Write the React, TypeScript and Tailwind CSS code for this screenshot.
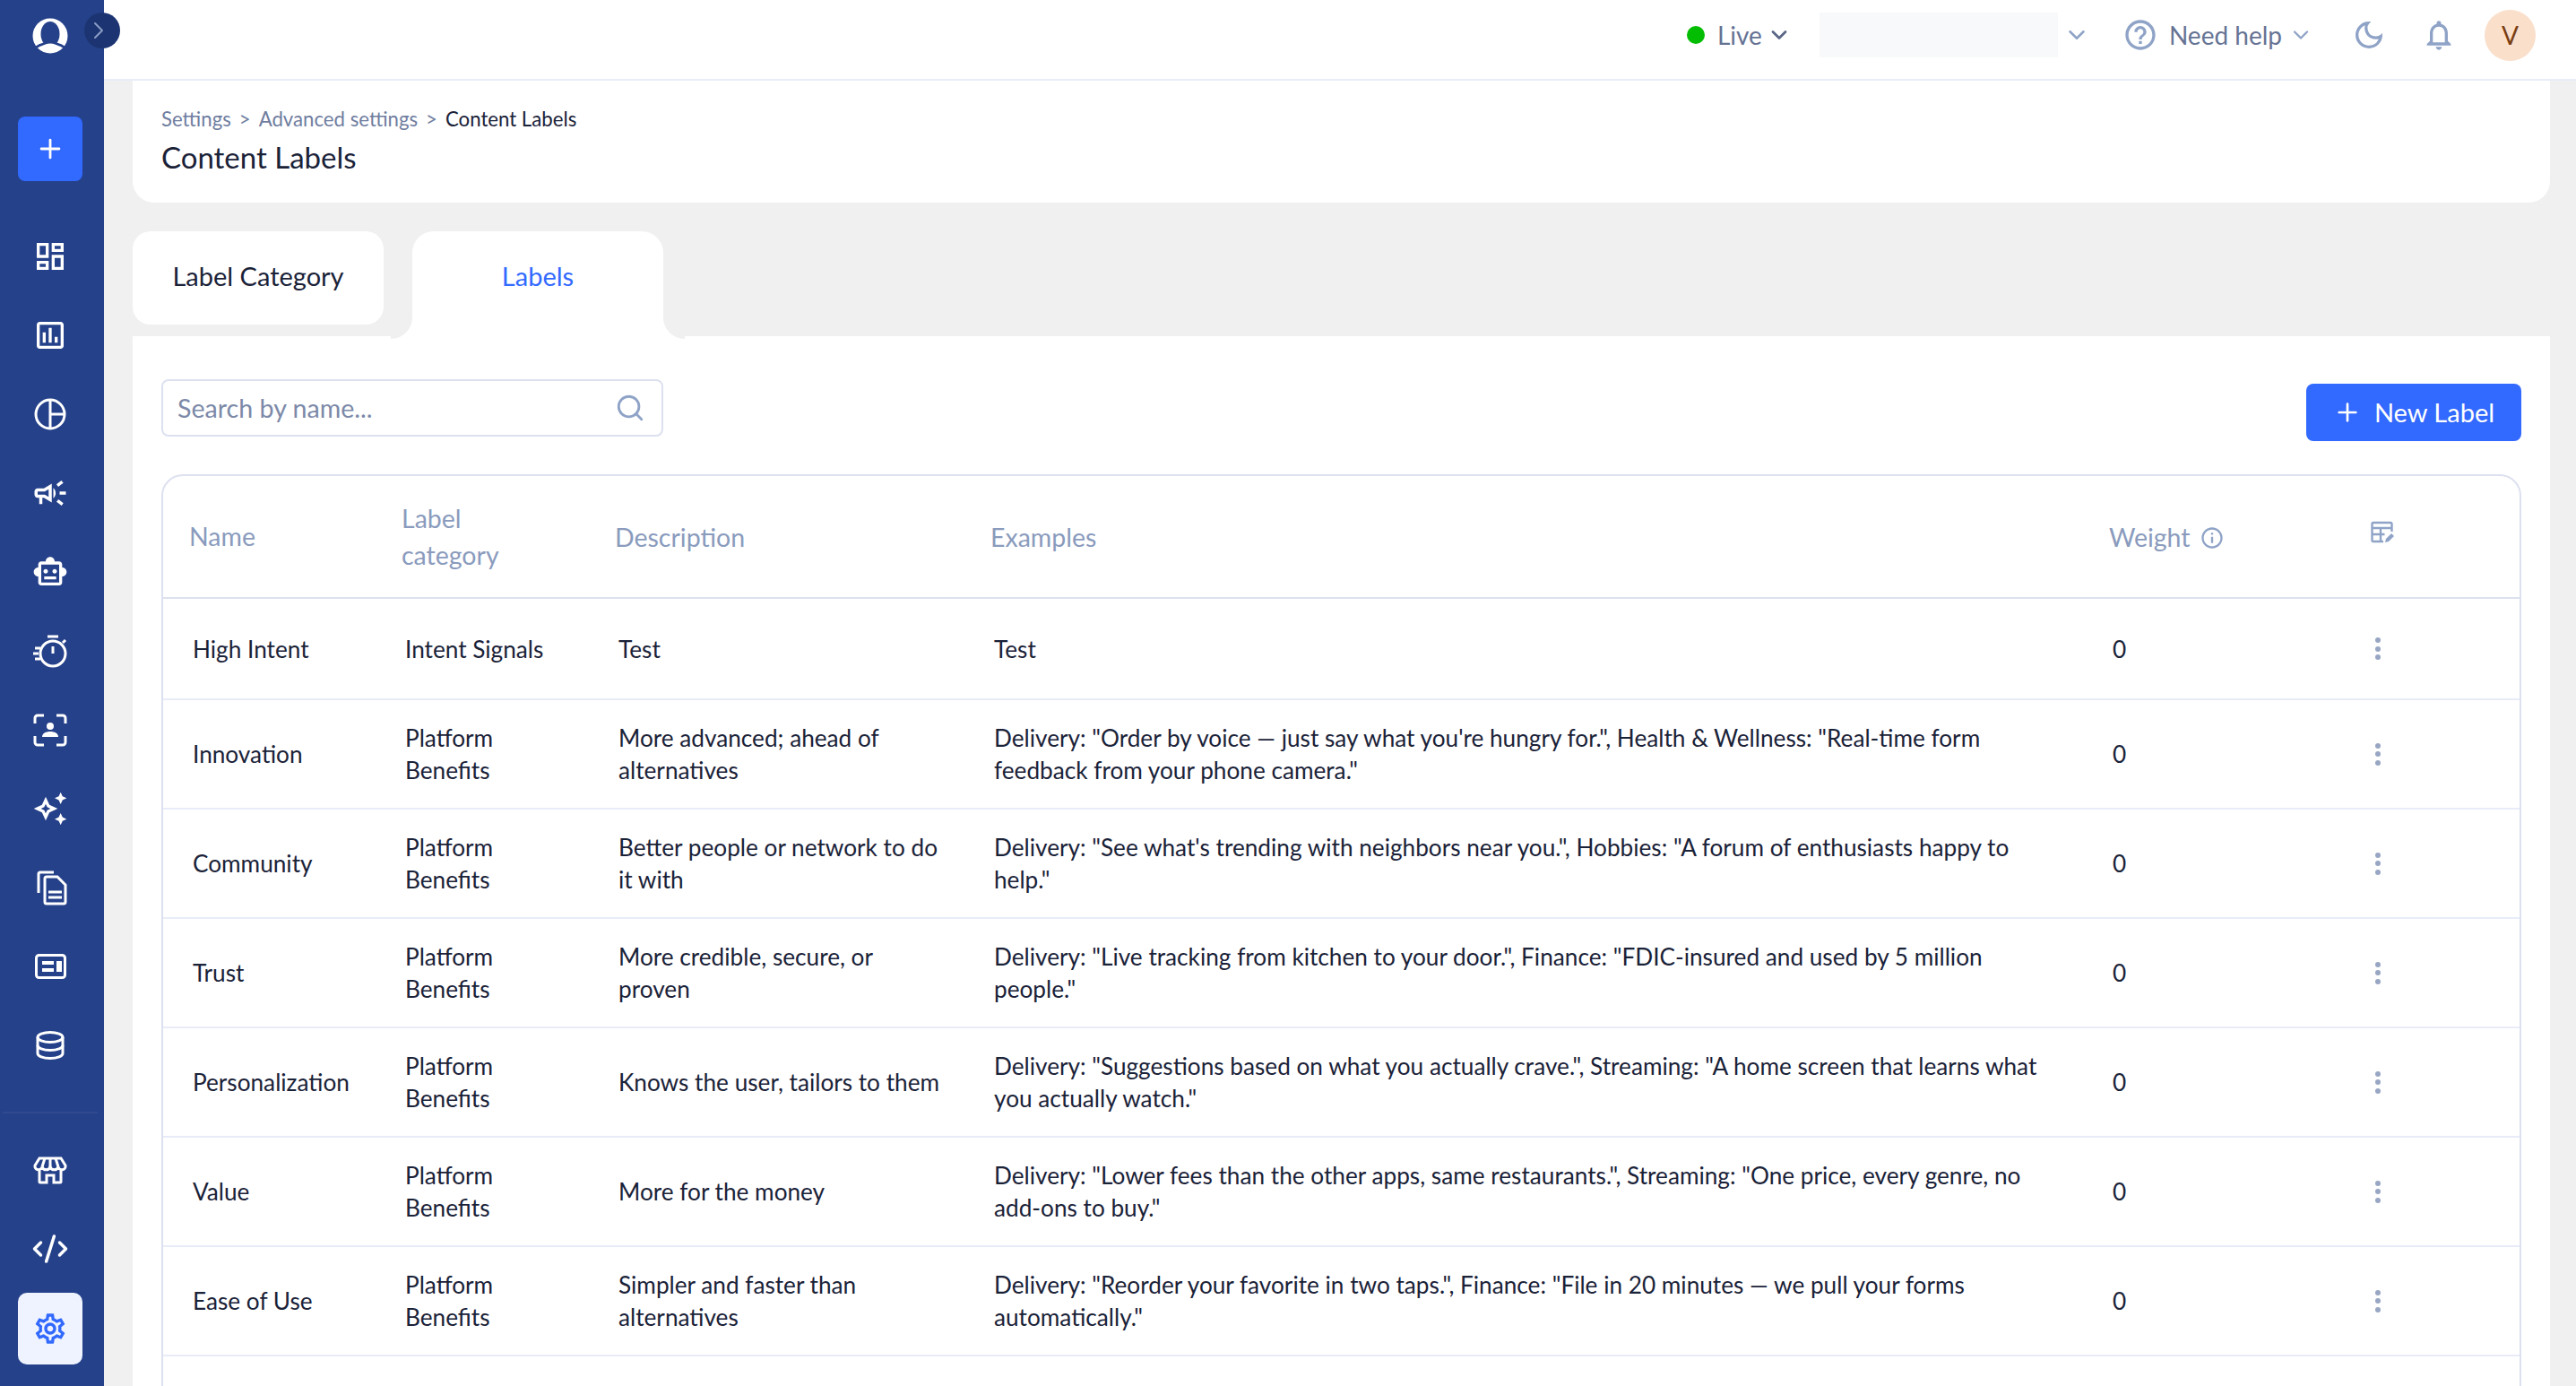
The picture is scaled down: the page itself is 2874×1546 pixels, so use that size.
import { ChevronDown, ChevronRight, CodeXml, Plus, Search } from "lucide-react";
import {
  MdOutlineDashboard,
  MdOutlineAssessment,
  MdOutlineCampaign,
  MdOutlineSmartToy,
  MdOutlineAutoAwesome,
  MdOutlineSettings,
  MdOutlineHelpOutline,
  MdOutlineNotifications,
  MdInfoOutline,
  MdOutlineDarkMode,
} from "react-icons/md";

const fontStack = "font-['Lato','Noto_Sans',sans-serif]";

const PieIcon = () => (
  <svg width="40" height="40" viewBox="0 0 40 40" fill="none" stroke="currentColor" strokeWidth="3">
    <circle cx="20" cy="20" r="16" />
    <path d="M20 4v32M20 20h16" />
  </svg>
);

const TimerIcon = () => (
  <svg width="40" height="40" viewBox="0 0 40 40" fill="none" stroke="currentColor" strokeWidth="3">
    <circle cx="23" cy="23" r="14" />
    <path d="M17 4h12M23 15v8M34 11l3-3M3 17h6M1 23h6M3 29h6" />
  </svg>
);

const FaceIcon = () => (
  <svg width="40" height="40" viewBox="0 0 40 40" fill="none" stroke="currentColor" strokeWidth="3">
    <path d="M3 13V7a3 3 0 0 1 3-3h7M27 4h7a3 3 0 0 1 3 3v6M37 27v7a3 3 0 0 1-3 3h-7M13 37H6a3 3 0 0 1-3-3v-7" />
    <circle cx="20" cy="16" r="4" fill="currentColor" stroke="none" />
    <path d="M11 28c0-4 4-6 9-6s9 2 9 6z" fill="currentColor" stroke="none" />
  </svg>
);

const DocsIcon = () => (
  <svg width="40" height="40" viewBox="0 0 40 40" fill="none" stroke="currentColor" strokeWidth="3">
    <path d="M7 26V5a2 2 0 0 1 2-2h15" />
    <path d="M14 10a2 2 0 0 1 2-2h12l9 9v19a2 2 0 0 1-2 2H16a2 2 0 0 1-2-2z" />
    <path d="M18 25h15M18 31h15" />
  </svg>
);

const NewsIcon = () => (
  <svg width="40" height="40" viewBox="0 0 40 40" fill="none">
    <rect x="4.5" y="7.5" width="32" height="25" rx="3" stroke="currentColor" strokeWidth="3" />
    <path d="M11 14h13v4H11zM11 22h13v4H11zM27 14h6v12h-6z" fill="currentColor" />
  </svg>
);

const DbIcon = () => (
  <svg width="40" height="40" viewBox="0 0 40 40" fill="none" stroke="currentColor" strokeWidth="3">
    <ellipse cx="20" cy="11" rx="14" ry="5.5" />
    <path d="M6 11v18c0 3 6 5.5 14 5.5S34 32 34 29V11" />
    <path d="M6 20c0 3 6 5.5 14 5.5S34 23 34 20" />
  </svg>
);

const StoreIcon = () => (
  <svg width="40" height="40" viewBox="0 0 40 40" fill="none" stroke="currentColor" strokeWidth="3">
    <path d="M8 7h24l5 8a4 4 0 0 1-8 1.5 4.7 4.7 0 0 1-9 0 4.7 4.7 0 0 1-9 0A4 4 0 0 1 3 15z" />
    <path d="M14 7l-3 9.5M26 7l3 9.5M20 7v9.5" />
    <path d="M8 21v12a1 1 0 0 0 1 1h7v-8h8v8h7a1 1 0 0 0 1-1V21" />
  </svg>
);

const Logo = () => (
  <svg width="40" height="40" viewBox="0 0 40 40">
    <circle cx="20" cy="20" r="19.5" fill="#fff" />
    <ellipse cx="20" cy="18" rx="10.5" ry="14" fill="#25418a" />
    <path d="M0 36 C5 32 10 28 20 28 C30 28 35 32 40 36" fill="none" stroke="#25418a" strokeWidth="3" />
    <path d="M10 33 C13 29.5 16 28.5 20 28.5 C24 28.5 27 29.5 30 33 C27 38 13 38 10 33z" fill="#fff" />
  </svg>
);

const TableEditIcon = () => (
  <svg width="26" height="26" viewBox="0 0 26 26" fill="none" stroke="#8fa3c7" strokeWidth="2.4">
    <path d="M14 23H3a1.5 1.5 0 0 1-1.5-1.5v-18A1.5 1.5 0 0 1 3 2h19a1.5 1.5 0 0 1 1.5 1.5V12" />
    <path d="M1.5 8h22M1.5 15h14M11 8v14" />
    <path d="M16 24l1-4 6-6 3 3-6 6z" fill="#8fa3c7" stroke="none" />
  </svg>
);

const navItems = [
  <MdOutlineDashboard size={40} key="a" />,
  <MdOutlineAssessment size={40} key="b" />,
  <PieIcon key="c" />,
  <MdOutlineCampaign size={42} key="d" />,
  <MdOutlineSmartToy size={40} key="e" />,
  <TimerIcon key="f" />,
  <FaceIcon key="g" />,
  <MdOutlineAutoAwesome size={40} key="h" />,
  <DocsIcon key="i" />,
  <NewsIcon key="j" />,
  <DbIcon key="k" />,
];

const rows = [
  { name: "High Intent", cat: "Intent Signals", desc: "Test", ex: "Test" },
  {
    name: "Innovation",
    cat: "Platform Benefits",
    desc: "More advanced; ahead of alternatives",
    ex: 'Delivery: "Order by voice — just say what you\'re hungry for.", Health & Wellness: "Real-time form feedback from your phone camera."',
  },
  {
    name: "Community",
    cat: "Platform Benefits",
    desc: "Better people or network to do it with",
    ex: 'Delivery: "See what\'s trending with neighbors near you.", Hobbies: "A forum of enthusiasts happy to help."',
  },
  {
    name: "Trust",
    cat: "Platform Benefits",
    desc: "More credible, secure, or proven",
    ex: 'Delivery: "Live tracking from kitchen to your door.", Finance: "FDIC-insured and used by 5 million people."',
  },
  {
    name: "Personalization",
    cat: "Platform Benefits",
    desc: "Knows the user, tailors to them",
    ex: 'Delivery: "Suggestions based on what you actually crave.", Streaming: "A home screen that learns what you actually watch."',
  },
  {
    name: "Value",
    cat: "Platform Benefits",
    desc: "More for the money",
    ex: 'Delivery: "Lower fees than the other apps, same restaurants.", Streaming: "One price, every genre, no add-ons to buy."',
  },
  {
    name: "Ease of Use",
    cat: "Platform Benefits",
    desc: "Simpler and faster than alternatives",
    ex: 'Delivery: "Reorder your favorite in two taps.", Finance: "File in 20 minutes — we pull your forms automatically."',
  },
  { name: "", cat: "", desc: "", ex: "" },
];

const thClass = "pl-[29px] pr-[30px] text-left align-middle font-normal";
const tdClass = "pl-[33px] pr-[22px] align-middle border-b-2 border-[#e8ecf8]";

const Sidebar = () => (
  <aside className="relative z-10 flex w-[116px] shrink-0 flex-col items-center bg-[#25418a] pr-[4px] text-white">
    <div className="mt-[20px] h-[40px] w-[40px]">
      <Logo />
    </div>
    <button className="mt-[70px] flex h-[72px] w-[72px] items-center justify-center rounded-[8px] bg-[#3269ff]">
      <Plus size={34} strokeWidth={2} />
    </button>
    <nav className="mt-[40px] flex flex-col items-center">
      {navItems.map((icon) => (
        <div key={icon.key} className="flex h-[88px] w-[72px] items-center justify-center">
          {icon}
        </div>
      ))}
    </nav>
    <div className="mt-[30px] h-[2px] w-[106px] bg-[#31498f]" />
    <div className="mt-[19px] flex h-[88px] items-center justify-center">
      <StoreIcon />
    </div>
    <div className="flex h-[88px] items-center justify-center">
      <CodeXml size={42} strokeWidth={2} />
    </div>
    <div className="mt-[5px] flex h-[80px] w-[72px] items-center justify-center rounded-[10px] bg-[#eff3ff] text-[#3269ff]">
      <MdOutlineSettings size={40} />
    </div>
    <div className="absolute left-[94px] top-[14px] flex h-[40px] w-[40px] items-center justify-end rounded-full bg-[#1c3572] pr-[8px]">
      <ChevronRight size={32} strokeWidth={1.5} className="text-[#8b9cc4]" />
    </div>
  </aside>
);

const Header = () => (
  <header className="flex h-[90px] shrink-0 items-center justify-end border-b-2 border-[#e8ecf8] bg-white pb-[10px] pr-[45px] text-[28px] text-[#667394]">
    <span className="h-[20px] w-[20px] rounded-full bg-[#02bd02]" />
    <span className="ml-[14px]">Live</span>
    <ChevronDown size={28} strokeWidth={2.4} className="ml-[5px] text-[#5a6685]" />
    <div className="ml-[31px] h-[50px] w-[266px] bg-[#f8f9fa]" />
    <ChevronDown size={30} strokeWidth={2} className="ml-[6px] text-[#8fa3c7]" />
    <MdOutlineHelpOutline size={40} className="ml-[36px] text-[#8fa3c7]" />
    <span className="ml-[12px]">Need help</span>
    <ChevronDown size={28} strokeWidth={2} className="ml-[7px] text-[#8fa3c7]" />
    <MdOutlineDarkMode size={40} className="ml-[42px] text-[#8fa3c7]" />
    <MdOutlineNotifications size={40} className="ml-[38px] text-[#8fa3c7]" />
    <div className="ml-[31px] flex h-[57px] w-[57px] items-center justify-center rounded-full bg-[#fadfcb] text-[28px] text-[#7a3e12]">
      V
    </div>
  </header>
);

const Tabs = () => (
  <div className="relative z-10 mt-[32px] flex h-[117px] shrink-0 items-start gap-[32px] text-[29px]">
    <button className="h-[104px] w-[280px] rounded-[20px] bg-white pb-[4px] text-[#1a2238]">
      Label Category
    </button>
    <button className="relative h-[120px] w-[280px] rounded-t-[24px] bg-white pb-[20px] text-[#3269ff]">
      Labels
      <span className="absolute bottom-[0px] left-[-24px] h-[25px] w-[24px] bg-white">
        <span className="block h-full w-full rounded-br-[24px] bg-[#f0f0f0]" />
      </span>
      <span className="absolute bottom-[0px] right-[-24px] h-[25px] w-[24px] bg-white">
        <span className="block h-full w-full rounded-bl-[24px] bg-[#f0f0f0]" />
      </span>
    </button>
  </div>
);

const LabelsTable = () => (
  <div className="mt-[37px] overflow-hidden rounded-t-[24px] border-2 border-[#dde1ef] text-[26.2px] leading-[36px] text-[#1a2238]">
    <table className="w-full table-fixed border-separate border-spacing-0">
      <colgroup>
        <col className="w-[237px]" />
        <col className="w-[238px]" />
        <col className="w-[419px]" />
        <col className="w-[1248px]" />
        <col className="w-[300px]" />
        <col />
      </colgroup>
      <thead className="text-[28.5px] text-[#8a9bbd]">
        <tr>
          <th className={`${thClass} h-[137px] border-b-2 border-[#dde1ef] leading-[41px]`}>Name</th>
          <th className={`${thClass} border-b-2 border-[#dde1ef] leading-[41px]`}>Label category</th>
          <th className={`${thClass} border-b-2 border-[#dde1ef]`}>Description</th>
          <th className={`${thClass} border-b-2 border-[#dde1ef]`}>Examples</th>
          <th className={`${thClass} border-b-2 border-[#dde1ef]`}>
            <span className="flex items-center gap-[10px]">
              Weight
              <MdInfoOutline size={28} className="mt-[2px] text-[#8fa3c7]" />
            </span>
          </th>
          <th className="border-b-2 border-[#dde1ef] pb-[10px] pl-[21px] text-left align-middle font-normal">
            <TableEditIcon />
          </th>
        </tr>
      </thead>
      <tbody>
        {rows.map((row, i) => (
          <tr key={i}>
            <td className={`${tdClass} ${i === 0 ? "h-[113px]" : "h-[122px]"}`}>{row.name}</td>
            <td className={`${tdClass} pr-[28px]`}>{row.cat}</td>
            <td className={tdClass}>{row.desc}</td>
            <td className={tdClass}>{row.ex}</td>
            <td className={tdClass}>{row.name && "0"}</td>
            <td className="border-b-2 border-[#e8ecf8] pl-[26px] align-middle">
              {row.name && (
                <span className="flex w-[6px] flex-col gap-[3.5px]">
                  <span className="h-[6px] w-[6px] rounded-full bg-[#98a6c4]" />
                  <span className="h-[6px] w-[6px] rounded-full bg-[#98a6c4]" />
                  <span className="h-[6px] w-[6px] rounded-full bg-[#98a6c4]" />
                </span>
              )}
            </td>
          </tr>
        ))}
      </tbody>
    </table>
  </div>
);

export default function App() {
  return (
    <div className={`flex h-[1546px] w-[2874px] overflow-hidden bg-[#f0f0f0] ${fontStack}`}>
      <Sidebar />
      <main className="flex min-w-0 flex-1 flex-col">
        <Header />
        <div className="flex min-h-0 flex-1 flex-col pl-[32px] pr-[29px]">
          {/* Page title */}
          <div className="h-[136px] shrink-0 rounded-b-[24px] bg-white pl-[32px] pt-[28px]">
            <div className="flex h-[30px] items-center text-[22.2px] text-[#6f7da0]">
              <span>Settings</span>
              <span className="mx-[9px]">&gt;</span>
              <span>Advanced settings</span>
              <span className="mx-[9px]">&gt;</span>
              <span className="text-[#1a2238]">Content Labels</span>
            </div>
            <h1 className="mt-[8px] text-[33px] font-normal leading-[38px] text-[#1a2238]">Content Labels</h1>
          </div>

          <Tabs />

          <div className="min-h-0 flex-1 bg-white px-[32px] pt-[48px]">
            <div className="flex items-start justify-between">
              <div className="flex h-[64px] w-[560px] items-center justify-between rounded-[8px] border-2 border-[#dde1ef] pl-[16px] pr-[18px] text-[28.6px] text-[#7c89a8]">
                <span>Search by name...</span>
                <Search size={34} strokeWidth={2} className="text-[#8fa3c7]" />
              </div>
              <button className="mt-[5px] flex h-[64px] w-[240px] items-center justify-center gap-[14px] rounded-[8px] bg-[#3269ff] text-[29px] text-white">
                <Plus size={32} strokeWidth={2} />
                New Label
              </button>
            </div>
            <LabelsTable />
          </div>
        </div>
      </main>
    </div>
  );
}
